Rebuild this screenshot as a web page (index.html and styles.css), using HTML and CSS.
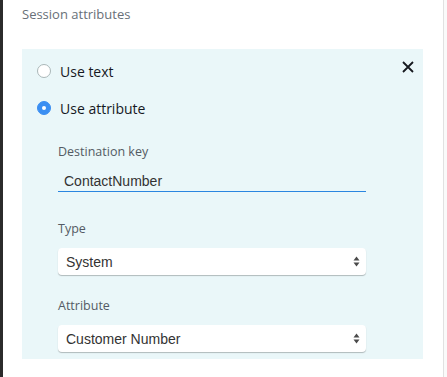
FILE: index.html
```html
<!DOCTYPE html>
<html lang="en">
<head>
    <meta charset="UTF-8">
    <meta name="viewport" content="width=device-width, initial-scale=1.0">
    <title>Session attributes</title>
    <link rel="stylesheet" href="styles.css">
</head>
<body>
    <div class="frame">
        <div class="side-bar"></div>
        <main class="content">
            <h2 class="section-title">Session attributes</h2>

            <div class="attr-panel">
                <button type="button" class="close-btn" aria-label="Remove">
                    <svg width="12" height="12" viewBox="0 0 12 12">
                        <path d="M1 1 L11 11 M11 1 L1 11" stroke="#16191f" stroke-width="1.8" fill="none"/>
                    </svg>
                </button>

                <div class="radio-group">
                    <label class="radio-row">
                        <span class="radio"></span>
                        <span>Use text</span>
                    </label>
                    <label class="radio-row">
                        <span class="radio checked"></span>
                        <span>Use attribute</span>
                    </label>
                </div>

                <div class="fields">
                    <div class="field">
                        <label class="field-label" for="destKey">Destination key</label>
                        <div class="input-line">
                            <input type="text" id="destKey" class="text-input" value="ContactNumber">
                        </div>
                    </div>
                    <div class="field">
                        <span class="field-label">Type</span>
                        <div class="select-box">
                            <span>System</span>
                            <svg class="arrows" width="7" height="11" viewBox="0 0 7 11">
                                <path d="M3.5 0.5 L6.5 4.5 L0.5 4.5 Z M3.5 10.5 L6.5 6.5 L0.5 6.5 Z" fill="#4a4a4a"/>
                            </svg>
                        </div>
                    </div>
                    <div class="field">
                        <span class="field-label">Attribute</span>
                        <div class="select-box">
                            <span>Customer Number</span>
                            <svg class="arrows" width="7" height="11" viewBox="0 0 7 11">
                                <path d="M3.5 0.5 L6.5 4.5 L0.5 4.5 Z M3.5 10.5 L6.5 6.5 L0.5 6.5 Z" fill="#4a4a4a"/>
                            </svg>
                        </div>
                    </div>
                </div>
            </div>
        </main>
        <div class="gutter"></div>
    </div>
</body>
</html>
```

FILE: styles.css
```css
* {
    box-sizing: border-box;
}

body {
    margin: 0;
    font-family: "Open Sans", "Noto Sans", sans-serif;
    background: #fff;
}

.frame {
    display: flex;
    height: 377px;
}

.side-bar {
    width: 3px;
    background: #2b2b2b;
}

.content {
    flex: 1;
    padding: 0 20px 0 19px;
}

.gutter {
    width: 4px;
    background: #fafafa;
    border-left: 1px solid #e1e1e1;
}

.section-title {
    margin: 0;
    padding-top: 5px;
    height: 49px;
    font-size: 13px;
    font-weight: normal;
    line-height: 18px;
    color: #687078;
}

.attr-panel {
    position: relative;
    background: #eaf7f9;
    padding: 12px 0 7px 15px;
}

.close-btn {
    position: absolute;
    top: 12px;
    right: 9px;
    padding: 0;
    border: none;
    background: none;
    line-height: 0;
}

.radio-group {
    display: flex;
    flex-direction: column;
    gap: 17px;
}

.radio-row {
    display: flex;
    align-items: center;
    gap: 9px;
    height: 20px;
    font-size: 14px;
    color: #16191f;
}

.radio {
    width: 14px;
    height: 14px;
    border-radius: 50%;
    background: #fff;
    border: 1px solid #aab7b8;
}

.radio.checked {
    background: #3b8ff2;
    border-color: #3b8ff2;
    display: flex;
    align-items: center;
    justify-content: center;
}

.radio.checked::after {
    content: "";
    width: 4px;
    height: 4px;
    border-radius: 50%;
    background: #fff;
}

.fields {
    padding: 26px 0 0 21px;
    width: 329px;
}

.field {
    display: flex;
    flex-direction: column;
}

.field + .field {
    margin-top: 29px;
}

.field:last-child {
    margin-top: 23px;
}

.field-label {
    font-size: 12.5px;
    line-height: 16px;
    color: #545b64;
    margin-bottom: 10px;
}

.input-line {
    height: 22px;
    border-bottom: 1px solid #2a86e0;
}

.text-input {
    display: block;
    width: 100%;
    height: 21px;
    border: 0;
    background: transparent;
    padding: 0 0 0 6px;
    font-family: "Liberation Sans", Arial, sans-serif;
    font-size: 14px;
    color: #333;
    outline: none;
}

.select-box {
    margin-top: 1px;
    display: flex;
    align-items: center;
    justify-content: space-between;
    height: 27px;
    padding: 0 6px 0 8px;
    background: #fff;
    border-radius: 4px;
    box-shadow: 0 1px 1px rgba(0, 0, 0, 0.25);
    font-family: "Liberation Sans", Arial, sans-serif;
    font-size: 14px;
    color: #333;
}

.arrows {
    display: block;
}
```
